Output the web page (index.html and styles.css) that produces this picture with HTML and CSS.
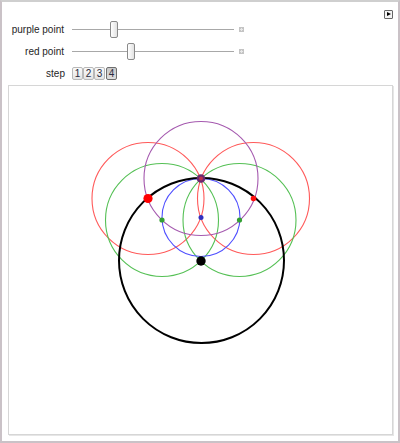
FILE: index.html
```html
<!DOCTYPE html>
<html>
<head>
<meta charset="utf-8">
<link rel="stylesheet" href="styles.css">
</head>
<body>
<div class="frame">
  <div class="topbar"><span class="play"></span></div>
  <div class="controls">
    <div class="label">purple point</div>
    <div class="slider">
      <div class="track"><span class="thumb" style="left:38px"></span></div>
      <span class="plus"></span>
    </div>
    <div class="label">red point</div>
    <div class="slider">
      <div class="track"><span class="thumb" style="left:55px"></span></div>
      <span class="plus"></span>
    </div>
    <div class="label step-label">step</div>
    <div class="steps">
      <span class="sbtn">1</span><span class="sbtn">2</span><span class="sbtn">3</span><span class="sbtn on">4</span>
    </div>
  </div>
  <div class="panel">
    <svg class="plot" width="383" height="348" viewBox="9 86 383 348">
      <g fill="none" stroke-width="1.1">
        <circle cx="148" cy="198.5" r="56" stroke="#ff5a5a"/>
        <circle cx="253.5" cy="198.5" r="56" stroke="#ff5a5a"/>
        <circle cx="162" cy="220" r="56.5" stroke="#55c055"/>
        <circle cx="239.5" cy="220" r="56.5" stroke="#55c055"/>
        <circle cx="201" cy="178.5" r="57" stroke="#a55aaf"/>
        <circle cx="201" cy="217.5" r="39" stroke="#4f4fff"/>
        <circle cx="201.5" cy="260.5" r="82.5" stroke="#000" stroke-width="2"/>
      </g>
      <circle cx="148" cy="198.5" r="4.6" fill="#ff0000"/>
      <circle cx="253.5" cy="198.5" r="2.8" fill="#ff1010"/>
      <circle cx="162" cy="220" r="2.6" fill="#33a033"/>
      <circle cx="239.5" cy="220" r="2.6" fill="#33a033"/>
      <circle cx="201" cy="217.5" r="2.5" fill="#3030c0"/>
      <circle cx="201" cy="178.5" r="4.3" fill="#6a2a70"/>
      <circle cx="201" cy="178.5" r="2" fill="#c03050"/>
      <circle cx="201" cy="261" r="4.7" fill="#000"/>
    </svg>
  </div>
</div>
</body>
</html>
```
FILE: styles.css
```css
html, body {
  margin: 0;
  padding: 0;
  background: #fff;
}
.frame {
  width: 400px;
  height: 443px;
  box-sizing: border-box;
  border: 2px solid #cac2c7;
  border-top-color: #cfcfcf;
  padding: 8px 5px 0 6px;
  display: flex;
  flex-direction: column;
  font-family: "Liberation Sans", Arial, sans-serif;
  font-size: 10px;
  color: #222;
}
.topbar {
  display: flex;
  justify-content: flex-end;
  height: 9px;
}
.play {
  width: 9px;
  height: 9px;
  box-sizing: border-box;
  border: 1px solid #666;
  border-radius: 1px;
  background: #f4f4f4;
  position: relative;
}
.play::after {
  content: "";
  position: absolute;
  left: 2px;
  top: 1px;
  border-left: 4px solid #000;
  border-top: 2.5px solid transparent;
  border-bottom: 2.5px solid transparent;
}
.controls {
  display: grid;
  grid-template-columns: 60px auto;
  grid-template-rows: 17px 17px 15px;
  column-gap: 8px;
  row-gap: 5px;
  margin-top: 2px;
  margin-left: -6px;
  padding-left: 2px;
}
.label {
  text-align: right;
  align-self: center;
  line-height: 12px;
  color: #1e1e1e;
}
.step-label {
  margin-right: -1px;
  align-self: end;
  line-height: 13px;
}
.slider {
  display: flex;
  align-items: center;
  gap: 5px;
}
.track {
  position: relative;
  width: 162px;
  height: 1px;
  background: #a8a8a8;
}
.thumb {
  position: absolute;
  top: -8px;
  width: 8px;
  height: 17px;
  box-sizing: border-box;
  border: 1px solid #8a8a8a;
  border-radius: 2px;
  background: linear-gradient(to right, #ffffff, #e2e2e2);
}
.plus {
  width: 5px;
  height: 5px;
  background: #c4c4c4;
  position: relative;
}
.plus::before, .plus::after {
  content: "";
  position: absolute;
  background: #e8e8e8;
}
.plus::before { left: 2px; top: 1px; width: 1px; height: 3px; }
.plus::after { left: 1px; top: 2px; width: 3px; height: 1px; }
.steps {
  display: flex;
  align-self: end;
}
.sbtn {
  width: 11px;
  height: 13px;
  box-sizing: border-box;
  border: 1px solid #b8b8b8;
  border-radius: 2px;
  background: linear-gradient(#fafafa, #e4e4e4);
  font-size: 10px;
  line-height: 11px;
  text-align: center;
  color: #2a2a40;
}
.sbtn.on {
  border-color: #6e6e6e;
  background: linear-gradient(#c8c8c8, #dedede);
  margin-left: 1px;
}
.panel {
  margin-top: 5px;
  width: 385px;
  height: 350px;
  box-sizing: border-box;
  border: 1px solid #d6d6d6;
  box-shadow: 1px 1px 0 #e6e6e6;
  background: #fff;
}
.plot {
  display: block;
}
```
